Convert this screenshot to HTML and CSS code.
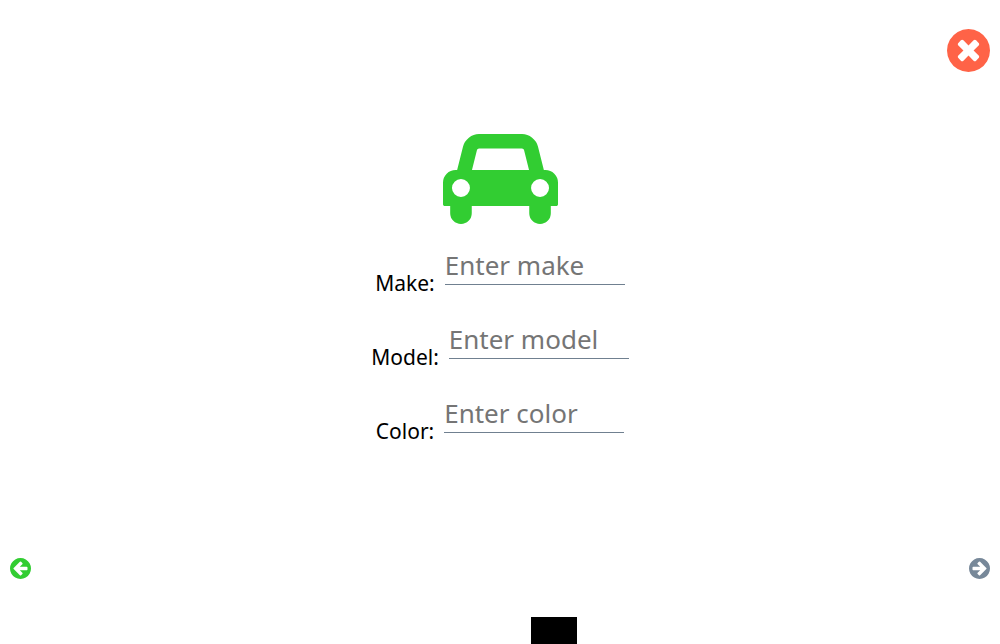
FILE: index.html
```
<!DOCTYPE html>
<html lang="en">
<head>
<meta charset="utf-8">
<title>Add a car</title>
<link rel="stylesheet" href="styles.css">
</head>
<body>
<header class="top">
  <button class="icon-button close" type="button" aria-label="Close">
    <svg viewBox="0 -1408 1536 1536" aria-hidden="true"><path transform="scale(1 -1)" d="M1149 414q0 26 -19 45l-181 181l181 181q19 19 19 45q0 27 -19 46l-90 90q-19 19 -46 19q-26 0 -45 -19l-181 -181l-181 181q-19 19 -45 19q-27 0 -46 -19l-90 -90q-19 -19 -19 -46q0 -26 19 -45l181 -181l-181 -181q-19 -19 -19 -45q0 -27 19 -46l90 -90q19 -19 46 -19q26 0 45 19l181 181l181 -181q19 -19 45 -19q27 0 46 19l90 90q19 19 19 46zM1536 640q0 -209 -103 -385.5t-279.5 -279.5t-385.5 -103t-385.5 103t-279.5 279.5t-103 385.5t103 385.5t279.5 279.5t385.5 103t385.5 -103t279.5 -279.5t103 -385.5z"/></svg>
  </button>
</header>
<main class="content">
  <svg class="car" viewBox="0 -1408 2048 1600" aria-hidden="true"><path transform="scale(1 -1)" d="M480 448q0 66 -47 113t-113 47t-113 -47t-47 -113t47 -113t113 -47t113 47t47 113zM516 768h1016l-89 357q-2 8 -14 17.5t-21 9.5h-768q-9 0 -21 -9.5t-14 -17.5zM1888 448q0 66 -47 113t-113 47t-113 -47t-47 -113t47 -113t113 -47t113 47t47 113zM2048 544v-384q0 -14 -9 -23t-23 -9h-96v-128q0 -80 -56 -136t-136 -56t-136 56t-56 136v128h-1024v-128q0 -80 -56 -136t-136 -56t-136 56t-56 136v128h-96q-14 0 -23 9t-9 23v384q0 93 65.5 158.5t158.5 65.5h28l105 419q23 94 104 157.5t179 63.5h768q98 0 179 -63.5t104 -157.5l105 -419h28q93 0 158.5 -65.5t65.5 -158.5z"/></svg>
  <form class="form">
    <div class="field">
      <label class="label" for="make">Make:</label>
      <input class="input" id="make" type="text" placeholder="Enter make">
    </div>
    <div class="field">
      <label class="label" for="model">Model:</label>
      <input class="input" id="model" type="text" placeholder="Enter model">
    </div>
    <div class="field">
      <label class="label" for="color">Color:</label>
      <input class="input" id="color" type="text" placeholder="Enter color">
    </div>
  </form>
</main>
<nav class="pager">
  <button class="icon-button previous" type="button" aria-label="Previous">
    <svg viewBox="0 -1408 1536 1536" aria-hidden="true"><path transform="translate(1536 0) scale(-1 -1)" d="M1285 640q0 27 -18 45l-91 91l-362 362q-18 18 -45 18t-45 -18l-91 -91q-18 -18 -18 -45t18 -45l189 -189h-502q-26 0 -45 -19t-19 -45v-128q0 -26 19 -45t45 -19h502l-189 -189q-19 -19 -19 -45t19 -45l91 -91q18 -18 45 -18t45 18l362 362l91 91q18 18 18 45zM1536 640q0 -209 -103 -385.5t-279.5 -279.5t-385.5 -103t-385.5 103t-279.5 279.5t-103 385.5t103 385.5t279.5 279.5t385.5 103t385.5 -103t279.5 -279.5t103 -385.5z"/></svg>
  </button>
  <button class="icon-button next" type="button" aria-label="Next">
    <svg viewBox="0 -1408 1536 1536" aria-hidden="true"><path transform="scale(1 -1)" d="M1285 640q0 27 -18 45l-91 91l-362 362q-18 18 -45 18t-45 -18l-91 -91q-18 -18 -18 -45t18 -45l189 -189h-502q-26 0 -45 -19t-19 -45v-128q0 -26 19 -45t45 -19h502l-189 -189q-19 -19 -19 -45t19 -45l91 -91q18 -18 45 -18t45 18l362 362l91 91q18 18 18 45zM1536 640q0 -209 -103 -385.5t-279.5 -279.5t-385.5 -103t-385.5 103t-279.5 279.5t-103 385.5t103 385.5t279.5 279.5t385.5 103t385.5 -103t279.5 -279.5t103 -385.5z"/></svg>
  </button>
</nav>
<footer class="bottom">
  <div class="block"></div>
</footer>
</body>
</html>
```
FILE: styles.css
```
* {
  box-sizing: border-box;
}

body {
  display: flex;
  flex-direction: column;
  min-height: 100vh;
  margin: 0;
  background: #fff;
  color: #000;
  font-family: "Segoe UI", "Noto Sans", sans-serif;
}

.top {
  display: flex;
  justify-content: flex-end;
  padding: 29px 10px 0;
}

.icon-button {
  display: block;
  width: 21px;
  padding: 0;
  border: 0;
  background: none;
  cursor: pointer;
}

.icon-button svg {
  display: block;
  width: 100%;
  fill: currentColor;
}

.close {
  width: 43px;
  color: tomato;
}

.content {
  display: flex;
  flex: 1;
  flex-direction: column;
  align-items: center;
  padding-top: 62px;
}

.car {
  width: 115px;
  height: 90px;
  fill: limegreen;
}

.form {
  display: flex;
  flex-direction: column;
  align-items: center;
  gap: 28px;
  padding-top: 27px;
}

.field {
  display: flex;
  align-items: flex-end;
  gap: 10px;
  height: 46px;
}

.label {
  font-size: 21px;
  line-height: 28px;
}

.input {
  width: 180px;
  height: 37px;
  margin-bottom: 12px;
  padding: 0 0 3px;
  border: 0;
  border-bottom: 1px solid slategray;
  background: none;
  color: #000;
  font-family: inherit;
  font-size: 26px;
  line-height: 33px;
  outline: none;
}

.input::placeholder {
  color: #757575;
  opacity: 1;
}

.pager {
  display: flex;
  justify-content: space-between;
  padding: 0 10px 38px;
}

.previous {
  color: limegreen;
}

.next {
  color: lightslategray;
}

.bottom {
  display: flex;
  justify-content: center;
  padding-left: 108px;
}

.block {
  width: 46px;
  height: 27px;
  background: #000;
}
```
